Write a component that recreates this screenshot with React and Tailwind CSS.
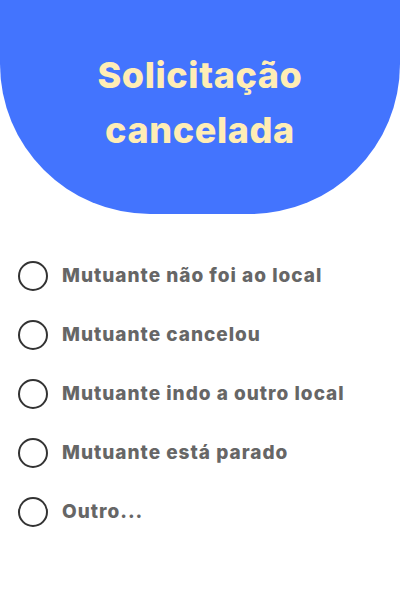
export default function App() {
  const items = [
    "Mutuante não foi ao local",
    "Mutuante cancelou",
    "Mutuante indo a outro local",
    "Mutuante está parado",
    "Outro...",
  ];
  return (
    <div className="w-[400px] h-[600px] bg-white" style={{ fontFamily: "Inter, 'Noto Sans', sans-serif" }}>
      <div className="h-[214px] bg-[#4374fe] rounded-b-[150px] flex items-center justify-center pb-[8px]">
        <h1 className="text-[36px] leading-[55px] font-extrabold tracking-[0.6px] text-[#ffedb5] text-center">
          Solicitação
          <br />
          cancelada
        </h1>
      </div>
      <div className="flex flex-col pt-[47px] pl-[18px] gap-[29px]">
        {items.map((t) => (
          <div key={t} className="flex items-center gap-[14px] h-[30px]">
            <div className="w-[30px] h-[30px] rounded-full border-[2.5px] border-[#333333] shrink-0" />
            <span className="text-[19px] font-extrabold tracking-[1px] text-[#666666]">{t}</span>
          </div>
        ))}
      </div>
    </div>
  );
}
